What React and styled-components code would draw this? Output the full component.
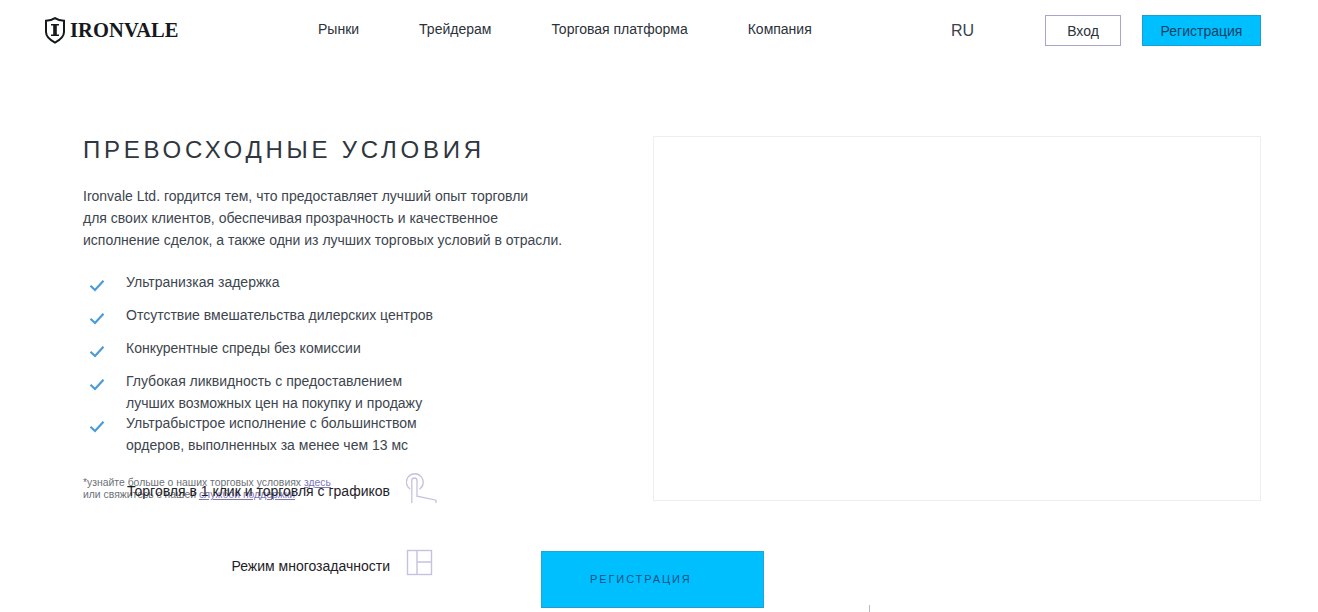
import React from 'react'
import styled, { createGlobalStyle } from 'styled-components'

const GlobalStyle = createGlobalStyle`
  html, body {
    margin: 0;
    padding: 0;
    height: 100%;
    overflow: hidden;
    background: #fff;
    font-family: 'Liberation Sans', Arial, sans-serif;
  }
`
const Page = styled.div`
  position: relative;
  width: 1318px;
  height: 612px;
  overflow: hidden;
`
const Header = styled.header`
  display: flex;
  align-items: center;
  height: 61px;
  padding: 0 57px 0 44px;
`
const Logo = styled.div`
  display: flex;
  align-items: center;
  gap: 4px;
  width: 274px;
  font-family: 'Liberation Serif', serif;
  font-weight: 700;
  font-size: 20.5px;
  letter-spacing: 0.1px;
  color: #15181c;
`
const Nav = styled.nav`
  display: flex;
  gap: 60px;
  width: 633px;
  padding-bottom: 4px;
  font-size: 14px;
  color: #2b323a;
`
const Lang = styled.div`
  width: 94px;
  font-size: 16px;
  color: #3a424b;
`
const HeaderButton = styled.a`
  display: flex;
  align-items: center;
  justify-content: center;
  box-sizing: border-box;
  height: 31px;
  width: ${props => props.primary ? '119px' : '76px'};
  margin-left: ${props => props.primary ? '21px' : '0'};
  font-size: 14px;
  color: ${props => props.primary ? '#123f66' : '#2b323a'};
  background: ${props => props.primary ? '#00bfff' : '#fff'};
  border: 1px solid ${props => props.primary ? '#1b9fd0' : '#a9a3cd'};
`
const Main = styled.main`
  display: flex;
  justify-content: space-between;
  height: 365px;
  margin-top: 75px;
  padding: 0 57px 0 83px;
`
const Info = styled.section`
  width: 500px;
`
const Title = styled.h1`
  margin: 0;
  font-size: 24px;
  font-weight: 400;
  line-height: 28px;
  letter-spacing: 3.75px;
  color: #2f363e;
`
const Lead = styled.p`
  margin: 21px 0 0;
  font-size: 14px;
  line-height: 22px;
  color: #3d454e;
`
const Checks = styled.ul`
  margin: 20px 0 0;
  padding: 0;
  list-style: none;
`
const CheckItem = styled.li`
  display: flex;
  align-items: flex-start;
  gap: 21px;
  padding-left: 6px;
  margin-bottom: ${props => props.tight ? '-2px' : '11px'};
  font-size: 14px;
  line-height: 22px;
  color: #3d454e;
  svg {
    flex: none;
    margin-top: 8px;
  }
`
const Footnote = styled.p`
  margin: 21px 0 0;
  font-size: 10.4px;
  line-height: 12px;
  color: #6c7178;
  a {
    color: #7d78b8;
    text-decoration: underline;
  }
`
const VideoBox = styled.div`
  box-sizing: border-box;
  width: 608px;
  border: 1px solid #eeeef2;
`
const Lower = styled.div`
  display: flex;
  align-items: flex-start;
  margin-top: -29px;
  padding-left: 83px;
`
const Features = styled.div`
  display: flex;
  flex-direction: column;
  gap: 45px;
  width: 354px;
`
const Feature = styled.div`
  display: flex;
  align-items: center;
  justify-content: flex-end;
  gap: 16px;
  font-size: 14px;
  color: #1e2227;
`
const FeatureLabel = styled.span`
  padding-top: 6px;
`
const CtaButton = styled.a`
  display: flex;
  align-items: center;
  box-sizing: border-box;
  width: 223px;
  height: 57px;
  margin: 79px 0 0 104px;
  padding: 0 0 2px 48px;
  font-size: 11px;
  letter-spacing: 1.9px;
  color: #17507f;
  background: #00bfff;
  border: 1px solid #1fa6d6;
  border-bottom-color: #2a9ac4;
`
const Tick = styled.span`
  position: absolute;
  left: 869px;
  top: 605px;
  width: 1px;
  height: 7px;
  background: #b9b6d6;
`

const ShieldIcon = () => (
  <svg width="22" height="27" viewBox="0 0 22 27" fill="none">
    <path d="M11 1.2 C13.5 2.8 16.5 3.6 20 3.8 V15 C20 20 15.5 23.2 11 25.6 C6.5 23.2 2 20 2 15 V3.8 C5.5 3.6 8.5 2.8 11 1.2 Z" stroke="#15181c" strokeWidth="2" />
    <path d="M7 7 H15 V8.6 H12.8 V17.4 H15 V19 H7 V17.4 H9.2 V8.6 H7 Z" fill="#15181c" />
  </svg>
)

const CheckIcon = () => (
  <svg width="16" height="13" viewBox="0 0 16 13" fill="none">
    <path d="M1.5 6.8 L6 11 L14.5 1.8" stroke="#4a9bd8" strokeWidth="2.2" />
  </svg>
)

const TouchIcon = () => (
  <svg width="31" height="32" viewBox="0 0 31 32" fill="none" stroke="#c5c2de" strokeWidth="1.3">
    <path d="M4.2 17.2 A8.4 8.4 0 1 1 13.4 17.2" />
    <path d="M5.8 31 V8.6 A2.6 2.6 0 0 1 11 8.6 V24.2 L30 28.2 V31" />
  </svg>
)

const LayoutIcon = () => (
  <svg width="31" height="28" viewBox="0 0 31 28" fill="none" stroke="#c5c2de" strokeWidth="1.4">
    <rect x="1.5" y="1.5" width="24" height="24" />
    <path d="M11 1.5 V25.5 M11 13 H25.5" />
  </svg>
)

const navItems = ['Рынки', 'Трейдерам', 'Торговая платформа', 'Компания']
const checks = [
  { lines: ['Ультранизкая задержка'] },
  { lines: ['Отсутствие вмешательства дилерских центров'] },
  { lines: ['Конкурентные спреды без комиссии'] },
  { lines: ['Глубокая ликвидность с предоставлением', 'лучших возможных цен на покупку и продажу'], tight: true },
  { lines: ['Ультрабыстрое исполнение с большинством', 'ордеров, выполненных за менее чем 13 мс'] },
]

function App() {
  return (
    <Page>
      <GlobalStyle />
      <Header>
        <Logo><ShieldIcon />IRONVALE</Logo>
        <Nav>
          {navItems.map(item => <span key={item}>{item}</span>)}
        </Nav>
        <Lang>RU</Lang>
        <HeaderButton>Вход</HeaderButton>
        <HeaderButton primary>Регистрация</HeaderButton>
      </Header>
      <Main>
        <Info>
          <Title>ПРЕВОСХОДНЫЕ УСЛОВИЯ</Title>
          <Lead>
            Ironvale Ltd. гордится тем, что предоставляет лучший опыт торговли<br />
            для своих клиентов, обеспечивая прозрачность и качественное<br />
            исполнение сделок, а также одни из лучших торговых условий в отрасли.
          </Lead>
          <Checks>
            {checks.map(check => (
              <CheckItem key={check.lines[0]} tight={check.tight}>
                <CheckIcon />
                <div>
                  {check.lines.map(line => <div key={line}>{line}</div>)}
                </div>
              </CheckItem>
            ))}
          </Checks>
          <Footnote>
            *узнайте больше о наших торговых условиях <a>здесь</a><br />
            или свяжитесь с нашей <a>службой поддержки</a>
          </Footnote>
        </Info>
        <VideoBox />
      </Main>
      <Lower>
        <Features>
          <Feature><FeatureLabel>Торговля в 1 клик и торговля с графиков</FeatureLabel><TouchIcon /></Feature>
          <Feature><FeatureLabel>Режим многозадачности</FeatureLabel><LayoutIcon /></Feature>
        </Features>
        <CtaButton>РЕГИСТРАЦИЯ</CtaButton>
      </Lower>
      <Tick />
    </Page>
  )
}

export default App
